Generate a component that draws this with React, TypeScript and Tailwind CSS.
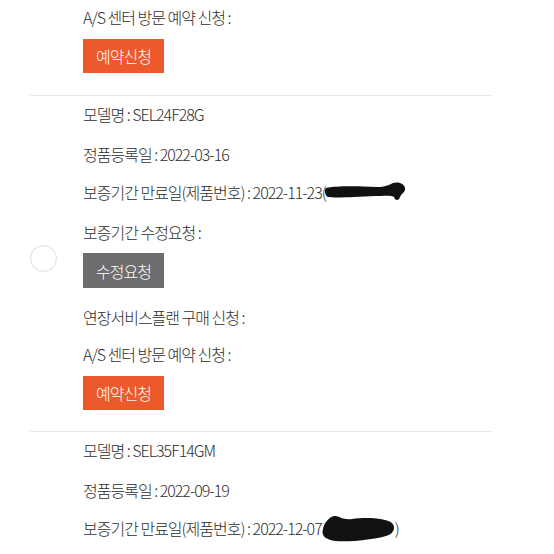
import React from 'react';

const font = { fontFamily: '"Noto Sans CJK KR", "Noto Sans", sans-serif' };

const Line = ({ children, className = '' }: { children: React.ReactNode; className?: string }) => (
    <div className={`h-[20px] flex items-center text-[16px] font-light leading-[20px] tracking-[-1px] text-[#2e2e2e] whitespace-nowrap ${className}`}>
        {children}
    </div>
);

const OrangeButton = ({ className = '' }: { className?: string }) => (
    <div className={`w-[81px] h-[34px] bg-[#ec5a2b] text-white text-[16px] font-light tracking-[-1px] flex items-center justify-center ${className}`}>
        예약신청
    </div>
);

const BlobA = () => (
    <svg width="82" height="24" viewBox="0 0 82 24" className="-ml-[1px]">
        <path d="M1 8 C 10 6, 30 6, 52 7 C 60 7, 64 5, 68 3 C 74 1, 81 4, 80 10 C 79 13, 76 14, 75 17 C 74 21, 70 21, 69 17 C 67 15, 58 16, 50 16 C 30 17, 10 18, 3 17 C 0 16, -1 10, 1 8 Z" fill="#111" />
    </svg>
);

const BlobB = () => (
    <svg width="76" height="30" viewBox="0 0 76 30" className="-ml-[6px] -mr-[1px]">
        <path d="M3 16 C 5 8, 11 2, 16 3 C 21 4, 23 7, 32 6 C 46 4, 66 5, 72 10 C 76 14, 74 21, 66 23 C 52 27, 30 29, 16 28 C 5 27, 1 22, 3 16 Z" fill="#111" />
    </svg>
);

export default function App() {
    return (
        <div className="w-[554px] h-[554px] overflow-hidden bg-white" style={font}>
            <div className="ml-[30px] w-[462px]">
                {/* top section, cut off */}
                <div className="pl-[53px] pt-[7px] pb-[22px] border-b border-[#e8e8e8]">
                    <Line>A/S 센터 방문 예약 신청 :</Line>
                    <OrangeButton className="mt-[12px]" />
                </div>

                {/* product section */}
                <div className="flex border-b border-[#e8e8e8]">
                    <div className="w-[53px] flex items-center">
                        <div className="w-[27px] h-[27px] rounded-full border border-[#dcdcdc] -mt-[10px]" />
                    </div>
                    <div className="pt-[8px] pb-[21px]">
                        <Line>모델명 : SEL24F28G</Line>
                        <Line className="mt-[20px]">정품등록일 : 2022-03-16</Line>
                        <Line className="mt-[18px]">
                            보증기간 만료일(제품번호) : 2022-11-23(
                            <BlobA />
                        </Line>
                        <Line className="mt-[20px]">보증기간 수정요청 :</Line>
                        <div className="mt-[11px] w-[81px] h-[35px] bg-[#6d6c6e] text-white text-[16px] font-light tracking-[-1px] flex items-center justify-center">
                            수정요청
                        </div>
                        <Line className="mt-[19px]">연장서비스플랜 구매 신청 :</Line>
                        <Line className="mt-[17px]">A/S 센터 방문 예약 신청 :</Line>
                        <OrangeButton className="mt-[12px]" />
                    </div>
                </div>

                {/* next section */}
                <div className="pl-[53px] pt-[8px]">
                    <Line>모델명 : SEL35F14GM</Line>
                    <Line className="mt-[20px]">정품등록일 : 2022-09-19</Line>
                    <Line className="mt-[18px]">
                        보증기간 만료일(제품번호) : 2022-12-07(
                        <BlobB />
                        )
                    </Line>
                </div>
            </div>
        </div>
    );
}
